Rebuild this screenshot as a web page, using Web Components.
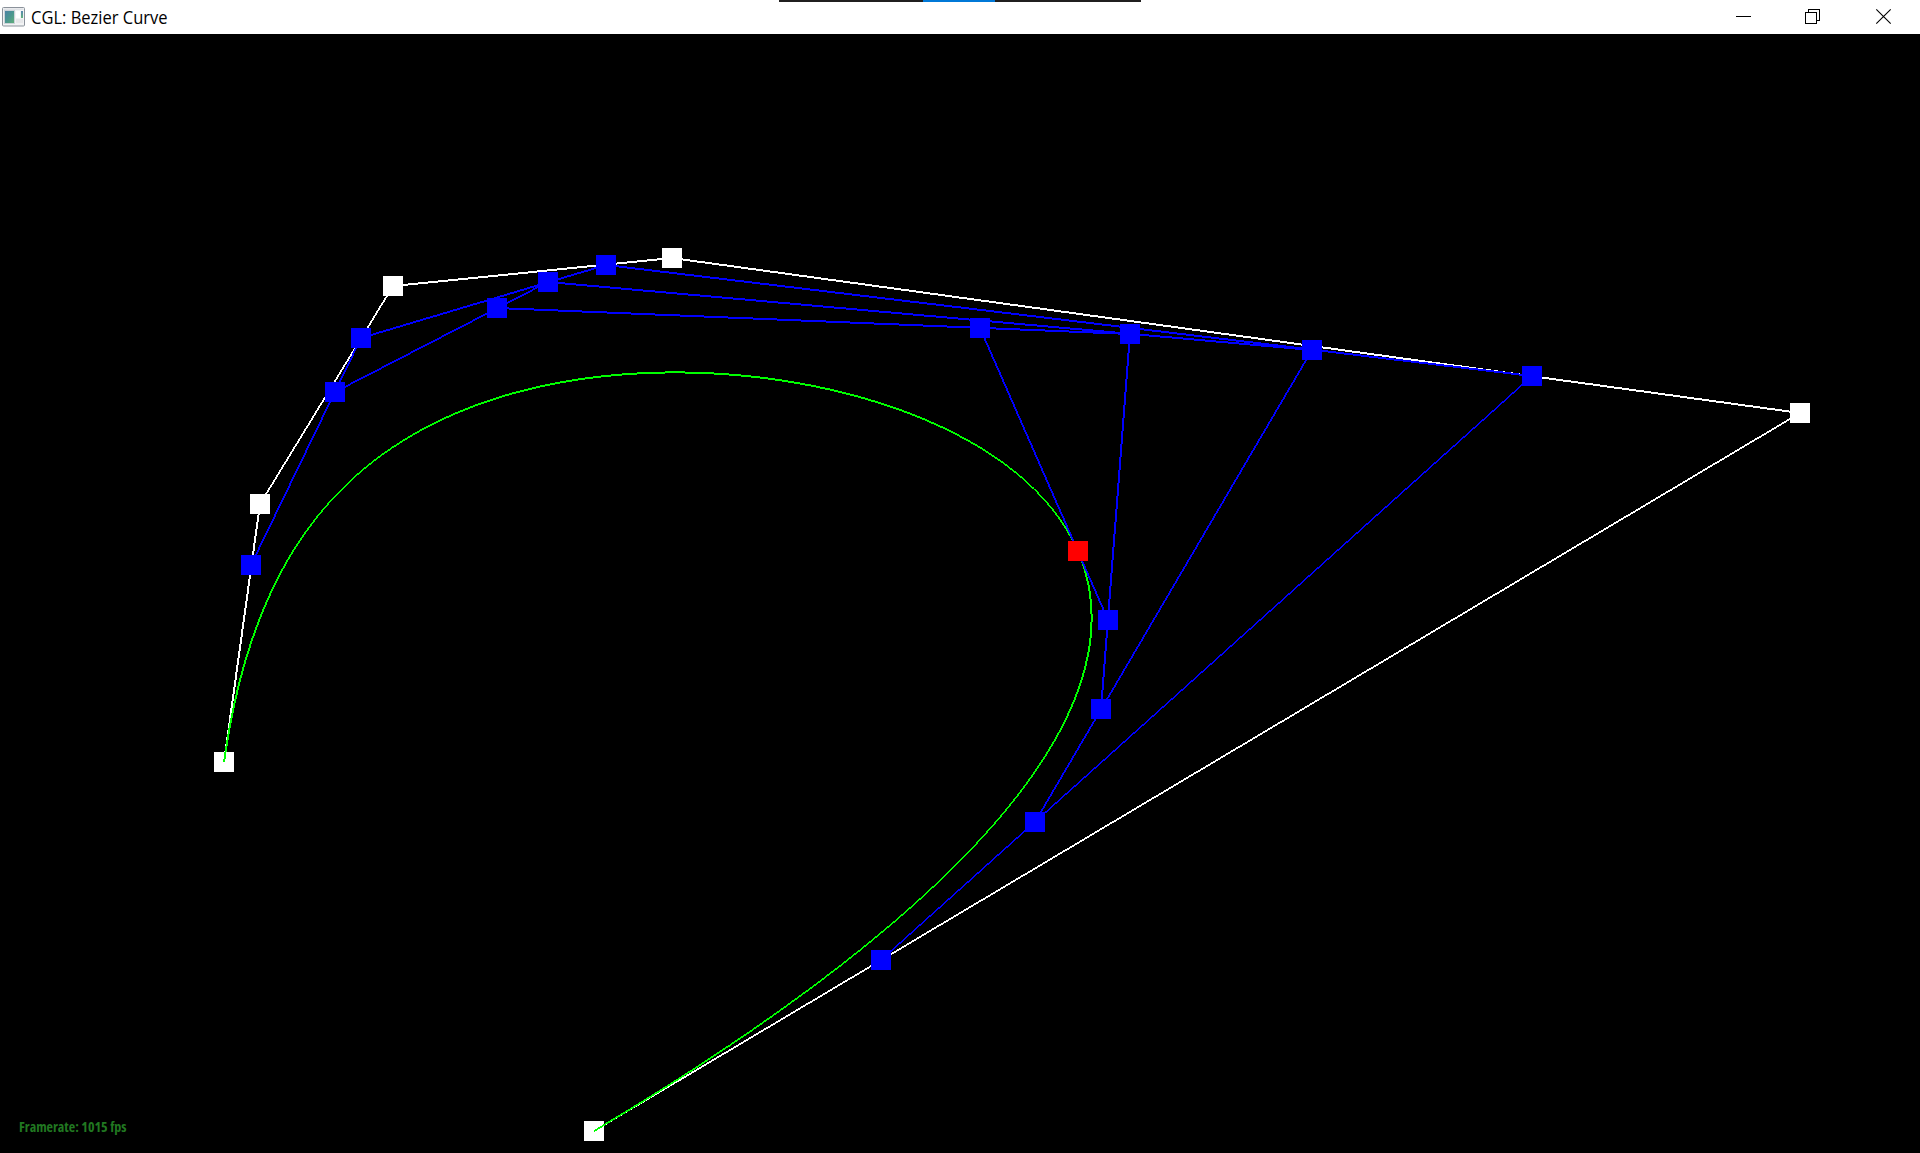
<!DOCTYPE html>
<html lang="en">
<head>
<meta charset="utf-8">
<title>CGL: Bezier Curve</title>
<style>
html, body { margin: 0; height: 100%; background: #000; overflow: hidden; }
</style>
</head>
<body>
<app-window>
  <title-bar slot="bar">CGL: Bezier Curve</title-bar>
  <bezier-view><frame-rate>Framerate: 1015 fps</frame-rate></bezier-view>
</app-window>
<script>
function define(name, html, setup) {
  customElements.define(name, class extends HTMLElement {
    constructor() {
      super();
      this.attachShadow({ mode: "open" }).innerHTML = html;
      if (setup) setup(this.shadowRoot);
    }
  });
}

define("app-window", `
<style>
:host { display: grid; grid-template-rows: 34px 1fr; width: 1920px; height: 1153px; background: #000; }
</style>
<slot name="bar"></slot><slot></slot>`);

define("app-icon", `
<style>:host { display: block; width: 23px; height: 20px; } svg { display: block; }</style>
<svg width="23" height="20" viewBox="0 0 23 20">
  <defs>
    <linearGradient id="g" x1="0" y1="0" x2="1" y2="1"><stop offset="0" stop-color="#4c80a6"/><stop offset=".5" stop-color="#4b9690"/><stop offset="1" stop-color="#62b078"/></linearGradient>
    <linearGradient id="s" x1="0" y1="0" x2="0" y2="1"><stop offset="0" stop-color="#5686b0"/><stop offset="1" stop-color="#63b37c"/></linearGradient>
  </defs>
  <rect x=".5" y=".5" width="22" height="18.5" rx="1" fill="#f2f3f4" stroke="#8b929b"/>
  <rect x="1.5" y="1.5" width="20" height="1.5" fill="#dfe2e6"/>
  <rect x="2.5" y="3.5" width="10" height="13" fill="url(#g)" stroke="#cdd3d8"/>
  <rect x="14" y="4" width="4" height="7" fill="#fff"/>
  <rect x="14" y="12" width="7" height="4" fill="#e6e7e9"/>
  <rect x="19" y="4" width="2" height="7" fill="url(#s)"/>
</svg>`);

define("caption-buttons", `
<style>
:host { display: flex; }
svg { display: block; fill: none; stroke: #000; }
</style>
<svg width="70" height="34"><path d="M27 16.5h15" shape-rendering="crispEdges"/></svg>
<svg width="70" height="34" shape-rendering="crispEdges"><path d="M26.5 12.5h11v11h-11zM29.5 12V9.5h11v11H38"/></svg>
<svg width="71" height="34"><path d="M27.3 9.3l14.4 14.4M41.7 9.3L27.3 23.7" stroke-width="1.1"/></svg>`);

define("snap-strip", `
<style>
:host { display: grid; grid-template-columns: 144px 72px 146px; height: 2px; width: 362px; background: #201f1f; }
i { grid-column: 2; background: #0078d7; }
</style><i></i>`);

define("title-bar", `
<style>
:host { display: grid; grid-template-columns: 779px 1fr auto; height: 34px; background: #fff; color: #000; }
.lead { display: flex; align-items: center; padding-left: 2px; }
.name { margin-left: 6px; font: 18px/26px "Open Sans", sans-serif; white-space: nowrap; transform: scaleX(.917); transform-origin: 0 50%; }
</style>
<div class="lead"><app-icon></app-icon><span class="name"><slot></slot></span></div>
<snap-strip></snap-strip>
<caption-buttons></caption-buttons>`);

define("frame-rate", `
<style>
:host { display: block; width: max-content; font: 700 14px/20px "Open Sans", sans-serif; font-stretch: 75%; color: #217821; white-space: nowrap; }
</style><slot></slot>`);

define("bezier-view", `
<style>
:host { display: grid; width: 1920px; height: 1119px; background: #000; }
svg, .overlay { grid-area: 1 / 1; display: block; }
.overlay { align-self: end; padding: 0 0 16px 19px; }
</style>
<svg width="1920" height="1119" viewBox="0 34 1920 1119" shape-rendering="crispEdges"></svg>
<div class="overlay"><slot></slot></div>`, root => {
  const levels = [
    [[594,1131],[1800,413],[672,258],[393,286],[260,504],[224,762]],
    [[881,960],[1532,376],[606,265],[361,338],[251,565]],
    [[1035,822],[1312,350],[548,282],[335,392]],
    [[1101,709],[1130,334],[497,308]],
    [[1108,620],[980,328]],
    [[1078,551]]
  ];

  // Two-pixel line widened along its minor axis, the way GL rasterises it.
  function segment([x0, y0], [x1, y1]) {
    const steep = Math.abs(y1 - y0) > Math.abs(x1 - x0);
    if (steep) [x0, y0, x1, y1] = [y0, x0, y1, x1];
    if (x0 > x1) [x0, y0, x1, y1] = [x1, y1, x0, y0];
    const from = Math.round(x0), to = Math.round(x1);
    let d = "", start = from, last = null;
    for (let x = from; x <= to; x++) {
      const y = x < to ? Math.round(y0 + (x + .5 - x0) * (y1 - y0) / (x1 - x0)) - 1 : NaN;
      if (last === null) last = y;
      if (y !== last) {
        const n = x - start;
        if (n > 0) d += steep ? `M${last} ${start}h2v${n}h-2z` : `M${start} ${last}h${n}v2h-${n}z`;
        start = x; last = y;
      }
    }
    return d;
  }
  const polyline = pts => pts.slice(1).map((p, i) => segment(pts[i], p)).join("");
  const squares = pts => pts.map(([x, y]) => `M${x - 10} ${y - 10}h20v20h-20z`).join("");

  function evaluate(pts, t) {
    while (pts.length > 1)
      pts = pts.slice(1).map((p, i) => [pts[i][0] + (p[0] - pts[i][0]) * t, pts[i][1] + (p[1] - pts[i][1]) * t]);
    return pts[0];
  }
  const curve = Array.from({ length: 201 }, (_, i) => evaluate(levels[0], i / 200)).map(([x, y]) => [x + .04, y]);

  const layers = [
    ["#fff", polyline(levels[0]) + squares(levels[0])],
    ["#0f0", polyline(curve)],
    ["#00f", levels.slice(1, 5).map(l => polyline(l) + squares(l)).join("")],
    ["#f00", squares(levels[5])]
  ];
  root.querySelector("svg").innerHTML = layers.map(([c, d]) => `<path fill="${c}" fill-rule="nonzero" d="${d}"/>`).join("");
});
</script>
</body>
</html>
